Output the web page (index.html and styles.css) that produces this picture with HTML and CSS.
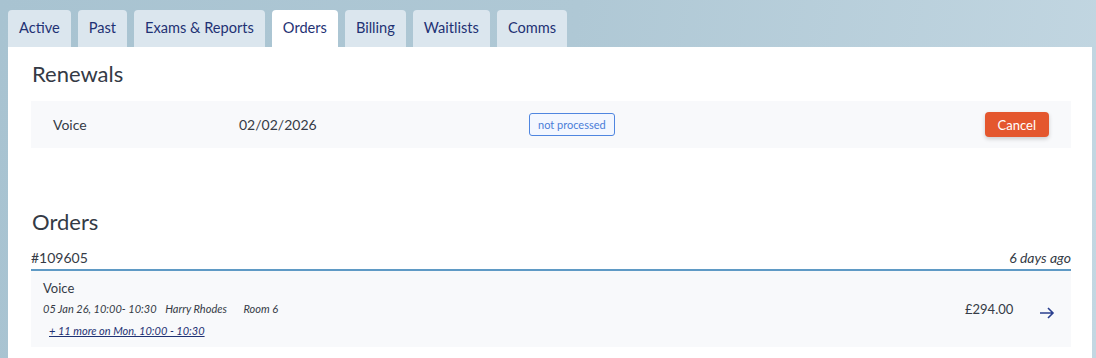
FILE: index.html
```html
<!DOCTYPE html>
<html lang="en">
<head>
    <meta charset="UTF-8">
    <meta name="viewport" content="width=device-width, initial-scale=1.0">
    <title>Orders</title>
    <link rel="stylesheet" href="styles.css">
</head>
<body>
    <nav class="tabs">
        <a class="tab" href="#">Active</a>
        <a class="tab" href="#">Past</a>
        <a class="tab" href="#">Exams &amp; Reports</a>
        <a class="tab active" href="#">Orders</a>
        <a class="tab" href="#">Billing</a>
        <a class="tab" href="#">Waitlists</a>
        <a class="tab" href="#">Comms</a>
    </nav>
    <div class="panel">
        <h2>Renewals</h2>
        <div class="renewal-row">
            <div class="renewal-name">Voice</div>
            <div class="renewal-date">02/02/2026</div>
            <div class="renewal-status"><span class="badge">not processed</span></div>
            <button class="cancel-button">Cancel</button>
        </div>

        <h2 class="orders-title">Orders</h2>
        <div class="order-head">
            <span class="order-number">#109605</span>
            <span class="order-age">6 days ago</span>
        </div>
        <div class="order-item">
            <div class="order-info">
                <div class="item-name">Voice</div>
                <div class="item-meta">
                    <span>05 Jan 26, 10:00- 10:30</span>
                    <span>Harry Rhodes</span>
                    <span class="room">Room 6</span>
                </div>
                <a class="item-more" href="#">+ 11 more on Mon, 10:00 - 10:30</a>
            </div>
            <div class="item-price">£294.00</div>
            <a class="item-arrow" href="#">
                <svg width="16" height="12" viewBox="0 0 16 12">
                    <path d="M1 6h13M9 1l5 5-5 5" fill="none" stroke="#2a3f8f" stroke-width="1.6"/>
                </svg>
            </a>
        </div>
    </div>
</body>
</html>
```

FILE: styles.css
```css
html {
    overflow: hidden;
}
body {
    font-family: Lato, "Noto Sans", sans-serif;
    margin: 0;
    padding: 10px 4px 0 8px;
    height: 358px;
    box-sizing: border-box;
    overflow: hidden;
    color: #353b46;
    background: linear-gradient(100deg, #a8c3d1 0%, #afc8d5 50%, #c3d7e2 100%);
}
.tabs {
    display: flex;
    gap: 7px;
}
.tab {
    display: block;
    height: 37px;
    line-height: 35px;
    padding: 0 11px;
    background-color: #dbe6ee;
    border-radius: 4px 4px 0 0;
    color: #1f3274;
    font-size: 14.6px;
    text-decoration: none;
}
.tab.active {
    background-color: #fff;
}
.panel {
    background-color: #fff;
    padding: 12px 21px 0 23px;
    height: 311px;
    box-sizing: border-box;
}
h2 {
    margin: 0 0 12px 1px;
    font-size: 22px;
    font-weight: normal;
    line-height: 30px;
    color: #343a45;
}
.renewal-row {
    display: flex;
    align-items: center;
    height: 47px;
    padding: 0 22px;
    background-color: #f8f9fb;
    font-size: 14px;
}
.renewal-name {
    width: 186px;
}
.renewal-date {
    width: 290px;
}
.renewal-status {
    flex: 1;
}
.badge {
    display: inline-block;
    height: 21px;
    line-height: 21px;
    padding: 0 8px;
    border: 1px solid #4f86e0;
    border-radius: 3px;
    background-color: #f3f7ff;
    color: #4a7dd8;
    font-size: 11px;
}
.cancel-button {
    height: 25px;
    padding: 0 13px;
    border: none;
    border-radius: 4px;
    background-color: #e4572e;
    color: #fff;
    font-family: inherit;
    font-size: 13px;
    box-shadow: 0 2px 4px rgba(0, 0, 0, 0.18);
    cursor: pointer;
}
.orders-title {
    margin-top: 59px;
    margin-bottom: 10px;
}
.order-head {
    display: flex;
    justify-content: space-between;
    align-items: center;
    height: 20px;
    padding-bottom: 2px;
    border-bottom: 2px solid #5f9ac5;
}
.order-number {
    font-size: 14px;
}
.order-age {
    font-size: 14px;
    font-style: italic;
}
.order-item {
    display: flex;
    align-items: center;
    height: 76px;
    padding: 0 16px 0 12px;
    background-color: #f8f9fb;
}
.order-info {
    flex: 1;
}
.item-name {
    font-size: 13px;
    line-height: 16px;
}
.item-meta {
    margin-top: 6px;
    font-size: 11px;
    font-style: italic;
    line-height: 14px;
}
.item-meta span {
    margin-right: 6px;
}
.item-meta .room {
    margin-left: 8px;
}
.item-more {
    display: inline-block;
    margin: 8px 0 0 6px;
    color: #1f3274;
    font-size: 11px;
    font-style: italic;
    line-height: 13px;
}
.item-price {
    width: 74px;
    font-size: 13px;
}
.item-arrow {
    display: block;
    height: 12px;
}
```
